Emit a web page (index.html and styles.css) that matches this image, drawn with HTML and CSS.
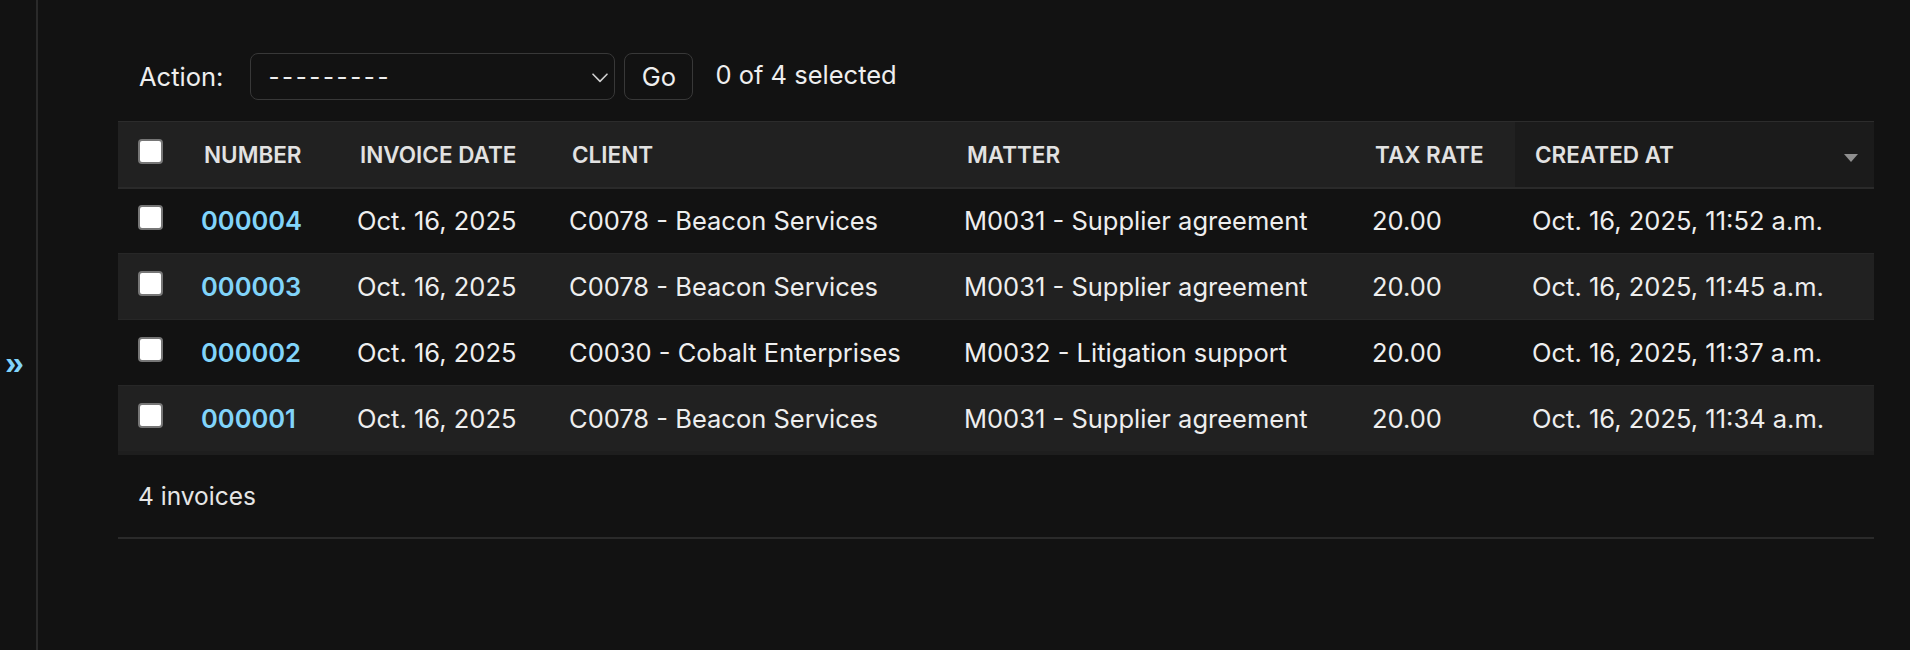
FILE: index.html
```html
<!DOCTYPE html>
<html lang="en">
<head>
<meta charset="utf-8">
<title>Select invoice to change</title>
<link rel="stylesheet" href="styles.css">
</head>
<body>
<div class="page">
  <button class="nav-toggle" type="button" aria-label="Toggle navigation"><span class="nav-toggle-glyph">»</span></button>
  <main class="content">
    <div class="actions">
      <label class="action-label" for="action">Action:</label>
      <span class="select-wrap">
        <select id="action" class="action-select">
          <option>---------</option>
        </select>
        <svg class="select-chevron" width="16" height="10" viewBox="0 0 16 10" aria-hidden="true"><path d="M1 1.2 L8 8.4 L15 1.2" fill="none" stroke="#cfcfcf" stroke-width="1.6" stroke-linecap="round" stroke-linejoin="round"/></svg>
      </span>
      <button class="go-btn" type="button">Go</button>
      <span class="action-counter">0 of 4 selected</span>
    </div>

    <table class="result-list">
      <colgroup>
        <col class="c-check"><col class="c-number"><col class="c-date"><col class="c-client"><col class="c-matter"><col class="c-tax"><col class="c-created">
      </colgroup>
      <thead>
        <tr>
          <th class="th-check"><input type="checkbox" class="cb" aria-label="Select all"></th>
          <th>Number</th>
          <th>Invoice date</th>
          <th>Client</th>
          <th>Matter</th>
          <th>Tax rate</th>
          <th class="sorted"><span class="th-inner">Created at<span class="sort-arrow"></span></span></th>
        </tr>
      </thead>
      <tbody>
        <tr>
          <td class="td-check"><input type="checkbox" class="cb"></td>
          <td><a href="#" class="num-link">000004</a></td>
          <td>Oct. 16, 2025</td>
          <td>C0078 - Beacon Services</td>
          <td>M0031 - Supplier agreement</td>
          <td>20.00</td>
          <td>Oct. 16, 2025, 11:52 a.m.</td>
        </tr>
        <tr>
          <td class="td-check"><input type="checkbox" class="cb"></td>
          <td><a href="#" class="num-link">000003</a></td>
          <td>Oct. 16, 2025</td>
          <td>C0078 - Beacon Services</td>
          <td>M0031 - Supplier agreement</td>
          <td>20.00</td>
          <td>Oct. 16, 2025, 11:45 a.m.</td>
        </tr>
        <tr>
          <td class="td-check"><input type="checkbox" class="cb"></td>
          <td><a href="#" class="num-link">000002</a></td>
          <td>Oct. 16, 2025</td>
          <td>C0030 - Cobalt Enterprises</td>
          <td>M0032 - Litigation support</td>
          <td>20.00</td>
          <td>Oct. 16, 2025, 11:37 a.m.</td>
        </tr>
        <tr>
          <td class="td-check"><input type="checkbox" class="cb"></td>
          <td><a href="#" class="num-link">000001</a></td>
          <td>Oct. 16, 2025</td>
          <td>C0078 - Beacon Services</td>
          <td>M0031 - Supplier agreement</td>
          <td>20.00</td>
          <td>Oct. 16, 2025, 11:34 a.m.</td>
        </tr>
      </tbody>
    </table>

    <p class="paginator">4 invoices</p>
  </main>
</div>
</body>
</html>
```

FILE: styles.css
```css
* { box-sizing: border-box; }

html, body {
  margin: 0;
  padding: 0;
  background: #121212;
  color: #eeeeee;
  font-family: Inter, "Noto Sans", "Liberation Sans", sans-serif;
}

.page {
  display: flex;
  min-height: 650px;
}

.nav-toggle {
  flex: 0 0 38px;
  width: 38px;
  min-height: 650px;
  margin: 0;
  padding: 0 0 0 5px;
  border: 0;
  border-right: 2px solid #2a2a2a;
  background: #121212;
  color: #81d4fa;
  display: flex;
  align-items: flex-start;
  justify-content: flex-start;
  cursor: pointer;
}

.nav-toggle-glyph {
  margin-top: 342px;
  font-size: 34px;
  font-weight: 700;
  line-height: 40px;
}

.content {
  flex: 1;
  padding: 53px 36px 0 80px;
}

.actions {
  display: flex;
  align-items: center;
  height: 47px;
  padding-left: 21px;
}

.action-label {
  font-size: 25.5px;
  margin-right: 27px;
  color: #eeeeee;
}

.select-wrap {
  position: relative;
  display: inline-block;
  width: 365px;
  height: 47px;
}

.action-select {
  appearance: none;
  -webkit-appearance: none;
  width: 100%;
  height: 100%;
  background: #121212;
  color: #eeeeee;
  border: 1.5px solid #383838;
  border-radius: 8px;
  padding: 0 0 0 17px;
  font-family: inherit;
  font-size: 24px;
  letter-spacing: 2.6px;
}

.select-chevron {
  position: absolute;
  right: 7px;
  top: 20px;
  pointer-events: none;
}

.go-btn {
  margin-left: 9px;
  width: 69px;
  height: 47px;
  background: #121212;
  color: #eeeeee;
  border: 1.5px solid #383838;
  border-radius: 8px;
  font-family: inherit;
  font-size: 25.5px;
  padding: 0;
}

.action-counter {
  margin-left: 22px;
  margin-bottom: 5px;
  font-size: 25.5px;
  color: #eeeeee;
}

.result-list {
  margin-top: 21px;
  width: 100%;
  table-layout: fixed;
  border-collapse: collapse;
}

.c-check { width: 66px; }
.c-number { width: 156px; }
.c-date { width: 212px; }
.c-client { width: 395px; }
.c-matter { width: 408px; }
.c-tax { width: 160px; }
.c-created { width: auto; }

.result-list thead th {
  height: 66px;
  padding: 0 0 0 20px;
  background: #212121;
  border-top: 1px solid #2c2c2c;
  border-bottom: 2px solid #2a2a2a;
  color: #e2e2e2;
  font-size: 22.5px;
  font-weight: 600;
  text-transform: uppercase;
  text-align: left;
  white-space: nowrap;
  vertical-align: middle;
}

.result-list thead th.sorted {
  background: #1b1b1b;
  padding-right: 16px;
}

.th-inner {
  display: flex;
  align-items: center;
  justify-content: space-between;
}

.sort-arrow {
  width: 0;
  height: 0;
  margin-top: 7px;
  border-left: 7px solid transparent;
  border-right: 7px solid transparent;
  border-top: 8px solid #8f8f8f;
}

.result-list tbody td {
  height: 66px;
  padding: 0 0 0 17px;
  border-bottom: 1px solid #272727;
  font-size: 25.5px;
  color: #eeeeee;
  white-space: nowrap;
  vertical-align: middle;
}

.result-list tbody tr:nth-child(even) td {
  background: #212121;
}

.result-list tbody tr:last-child td {
  height: 67px;
  border-bottom: 4px solid #1e1e1e;
}

.result-list thead th.th-check,
.result-list tbody td.td-check {
  padding-left: 20px;
}

.cb {
  appearance: none;
  -webkit-appearance: none;
  display: block;
  width: 25px;
  height: 25px;
  margin: -6px 0 0 0;
  background: #ffffff;
  border: 2px solid #767676;
  border-radius: 4px;
}

.num-link {
  color: #81d4fa;
  font-weight: 600;
  text-decoration: none;
}

.paginator {
  margin: 0;
  height: 84px;
  padding-left: 20px;
  display: flex;
  align-items: center;
  font-size: 24.5px;
  color: #e6e6e6;
  border-bottom: 2px solid #2a2a2a;
}
```
